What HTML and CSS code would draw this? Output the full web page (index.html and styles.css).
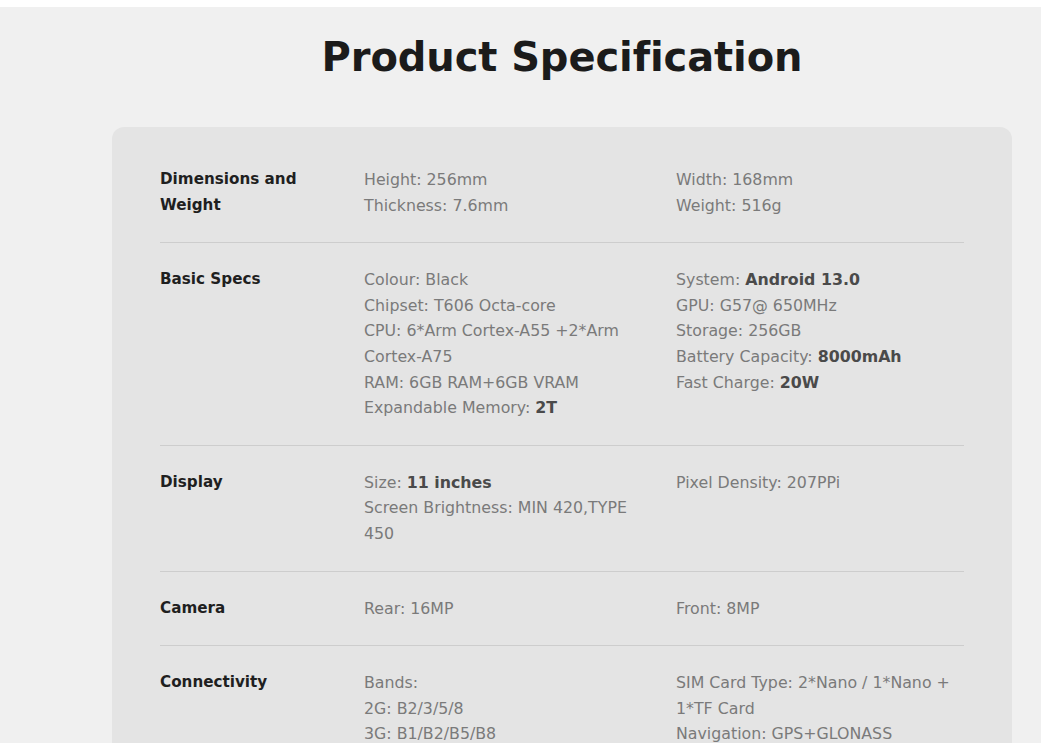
FILE: index.html
```html
<!DOCTYPE html>
<html lang="en">
<head>
<meta charset="utf-8">
<title>Product Specification</title>
<link rel="stylesheet" href="styles.css">
</head>
<body>
<main class="page">
  <div class="container">
    <h1 class="title">Product Specification</h1>
    <section class="card">
      <div class="row">
        <div class="label">Dimensions and Weight</div>
        <div class="col">
          <p>Height: 256mm</p>
          <p>Thickness: 7.6mm</p>
        </div>
        <div class="col">
          <p>Width: 168mm</p>
          <p>Weight: 516g</p>
        </div>
      </div>
      <div class="row">
        <div class="label">Basic Specs</div>
        <div class="col">
          <p>Colour: Black</p>
          <p>Chipset: T606 Octa-core</p>
          <p>CPU: 6*Arm Cortex-A55 +2*Arm Cortex-A75</p>
          <p>RAM: 6GB RAM+6GB VRAM</p>
          <p>Expandable Memory: <b>2T</b></p>
        </div>
        <div class="col">
          <p>System: <b>Android 13.0</b></p>
          <p>GPU: G57@ 650MHz</p>
          <p>Storage: 256GB</p>
          <p>Battery Capacity: <b>8000mAh</b></p>
          <p>Fast Charge: <b>20W</b></p>
        </div>
      </div>
      <div class="row">
        <div class="label">Display</div>
        <div class="col">
          <p>Size: <b>11 inches</b></p>
          <p>Screen Brightness: MIN 420,TYPE 450</p>
        </div>
        <div class="col">
          <p>Pixel Density: 207PPi</p>
        </div>
      </div>
      <div class="row">
        <div class="label">Camera</div>
        <div class="col">
          <p>Rear: 16MP</p>
        </div>
        <div class="col">
          <p>Front: 8MP</p>
        </div>
      </div>
      <div class="row">
        <div class="label">Connectivity</div>
        <div class="col">
          <p>Bands:</p>
          <p>2G: B2/3/5/8</p>
          <p>3G: B1/B2/B5/B8</p>
        </div>
        <div class="col col-last">
          <p>SIM Card Type: 2*Nano / 1*Nano + 1*TF Card</p>
          <p>Navigation: GPS+GLONASS</p>
        </div>
      </div>
    </section>
  </div>
</main>
</body>
</html>
```

FILE: styles.css
```css
* {
  box-sizing: border-box;
}

html, body {
  margin: 0;
  padding: 0;
  background: #ffffff;
}

body {
  font-family: "DejaVu Sans", "Liberation Sans", sans-serif;
  padding-top: 7px;
}

.page {
  background: #f0f0f0;
  padding: 26px 0 0;
  min-height: 735px;
}

.container {
  width: 900px;
  margin-left: 112px;
}

.title {
  margin: 0 0 46px;
  text-align: center;
  font-size: 40px;
  line-height: 48px;
  font-weight: 700;
  color: #1b1b1b;
  letter-spacing: -0.1px;
}

.card {
  background: #e4e4e4;
  border-radius: 12px;
  padding: 16px 48px 0;
}

.row {
  display: grid;
  grid-template-columns: 204px 312px 1fr;
  padding: 24px 0;
  border-bottom: 1px solid #cdcdcd;
  font-size: 15.8px;
  line-height: 25.6px;
}

.label {
  font-weight: 700;
  color: #1f1f1f;
  padding-right: 48px;
  font-size: 15.2px;
}

.col {
  color: #7a7a7a;
  padding-right: 24px;
}

.col-last {
  padding-right: 0;
}

.col p {
  margin: 0;
}

.col b {
  color: #4a4a4a;
  font-weight: 700;
}
```
